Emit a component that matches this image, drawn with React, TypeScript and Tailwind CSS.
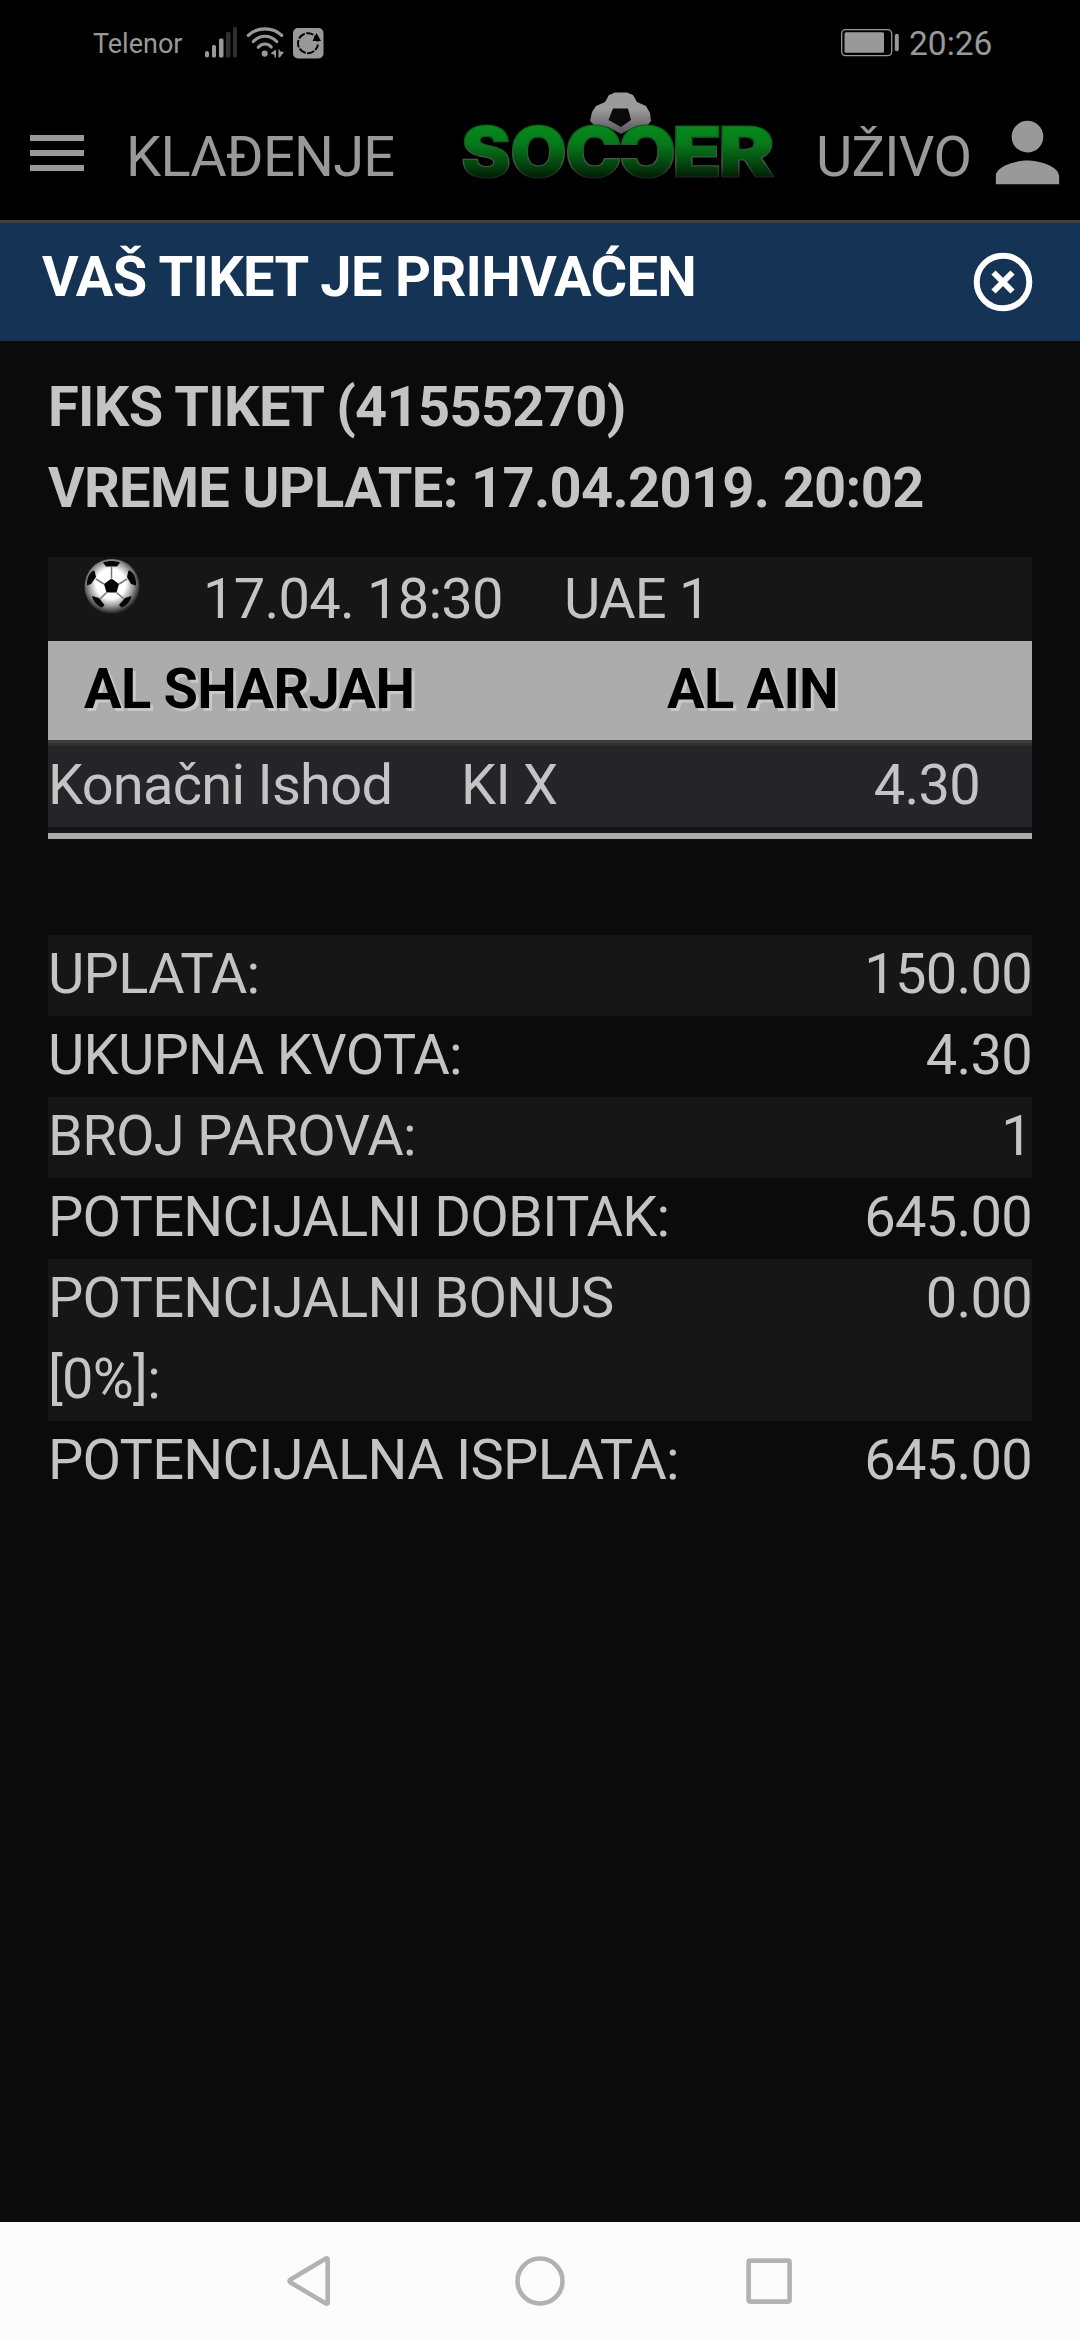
import React from 'react';

interface SummaryRow {
  label: string;
  value: string;
}

const summary: SummaryRow[] = [
  { label: 'UPLATA:', value: '150.00' },
  { label: 'UKUPNA KVOTA:', value: '4.30' },
  { label: 'BROJ PAROVA:', value: '1' },
  { label: 'POTENCIJALNI DOBITAK:', value: '645.00' },
  { label: 'POTENCIJALNI BONUS [0%]:', value: '0.00' },
  { label: 'POTENCIJALNA ISPLATA:', value: '645.00' },
];

const StatusBar: React.FC = () => (
  <div className="flex h-[86px] items-center pl-[93px] pr-[87px] tracking-normal text-[#999]">
    <span className="w-[111px] pt-px text-[27px] leading-[86px]">Telenor</span>
    <svg width="120" height="86" viewBox="204 0 120 86" fill="#999">
      <rect x="205" y="51" width="4" height="6.500" rx="2" />
      <rect x="212" y="45" width="4" height="12.500" rx="1.500" />
      <rect x="219" y="38.500" width="4.500" height="19" rx="1.500" />
      <rect x="226" y="32" width="4.500" height="25.500" rx="1.500" fill="#2f2f2f" />
      <rect x="233" y="27" width="4" height="30.500" rx="1.500" fill="#2f2f2f" />
      {/* wifi */}
      <g fill="none" stroke="#999" strokeWidth="3.200" strokeLinecap="round">
        <path d="M248.300 35.400C257 26.600 273 26.600 281.700 35.400" />
        <path d="M253.300 41.500C260 34.500 270 34.500 276.700 41.500" />
        <path d="M258.300 47.200C262 43 268 43 271.200 47" />
      </g>
      <circle cx="264.700" cy="53.600" r="3.100" />
      <path d="M276 49.500V57.500H274.500V55L270.500 53.200ZM278.500 49.500L279.800 49.500V51.300L284 52L279.800 57.500H278.500Z" />
      <rect x="293" y="28" width="30.500" height="30.500" rx="5" />
      <circle cx="308" cy="43.200" r="10" fill="none" stroke="#000" strokeWidth="2" strokeDasharray="7.500 1.500" />
      <path d="M312 41.500H321.500V44.500H312Z" fill="#999" />
      <path d="M316.500 33L321 41H312.500Z" fill="#000" />
    </svg>
    <div className="ml-auto flex items-center">
      <svg width="60" height="86" viewBox="840 0 60 86" fill="#999">
        <rect x="841.700" y="29.600" width="50" height="26" rx="4" fill="none" stroke="#999" strokeWidth="1.300" />
        <rect x="844.500" y="32.300" width="39.500" height="20.500" rx="1.500" />
        <rect x="894.800" y="33.800" width="4" height="17.500" rx="2" />
      </svg>
      <span className="ml-[9px] w-[84px] pt-px text-[33.5px] leading-[87px]">20:26</span>
    </div>
  </div>
);

const Logo: React.FC = () => (
  <svg className="shrink-0" width="320" height="114" viewBox="458 86 320 114">
    <defs>
      <linearGradient id="grass" gradientUnits="userSpaceOnUse" x1="0" y1="125" x2="0" y2="179">
        <stop offset="0" stopColor="#068a1c" />
        <stop offset="0.350" stopColor="#067a1b" />
        <stop offset="0.800" stopColor="#033a0c" />
        <stop offset="1" stopColor="#011803" />
      </linearGradient>
      <linearGradient id="edge" gradientUnits="userSpaceOnUse" x1="0" y1="125" x2="0" y2="179">
        <stop offset="0.200" stopColor="#0a5a18" />
        <stop offset="0.700" stopColor="#4c5a4c" />
        <stop offset="0.950" stopColor="#1c241c" />
      </linearGradient>
      <linearGradient id="leather" x1="0" y1="0" x2="0" y2="1">
        <stop offset="0.400" stopColor="#9b9b9b" />
        <stop offset="1" stopColor="#5a525a" />
      </linearGradient>
    </defs>
    <path
      d="M609 95L615 92.500H627L633 95L637 102L646 106L650 113L651 121L647 126L634 127L621 134L608 127L595 126L590 121L592 112L596 106L605 102Z"
      fill="url(#leather)"
    />
    <path d="M613 108.500H628L631 120L621 127L608.500 120Z" fill="#0a0a0a" />
    <g
      fontFamily="Inter, 'Liberation Sans', sans-serif"
      fontWeight="900"
      fontSize="70"
      letterSpacing="0"
      fill="url(#grass)"
      stroke="url(#edge)"
      strokeWidth="1.200"
    >
      <text x="461" y="177" textLength="50" lengthAdjust="spacingAndGlyphs">S</text>
      <text x="510" y="177" textLength="57" lengthAdjust="spacingAndGlyphs">O</text>
      <text x="565" y="177" textLength="57" lengthAdjust="spacingAndGlyphs">C</text>
      <text x="-676" y="177" textLength="57" lengthAdjust="spacingAndGlyphs" transform="scale(-1 1)">C</text>
      <text x="672" y="177" textLength="50" lengthAdjust="spacingAndGlyphs">E</text>
      <text x="718" y="177" textLength="57" lengthAdjust="spacingAndGlyphs">R</text>
    </g>
  </svg>
);

const Header: React.FC = () => (
  <header className="flex h-[137px] items-start border-b-3 border-[#414141] pl-[30px] pr-[5px] text-[#999]">
    <div className="mt-[49px] flex w-[54px] flex-col gap-[9px]">
      <div className="h-[6px] bg-[#999]" />
      <div className="h-[6px] bg-[#999]" />
      <div className="h-[6px] bg-[#999]" />
    </div>
    <span className="ml-[42px] mt-[31px] w-[332px] leading-[80px]">KLAĐENJE</span>
    <Logo />
    <span className="ml-[38px] mt-[31px] leading-[80px]">UŽIVO</span>
    <svg className="ml-auto mt-[19px] shrink-0" width="95" height="95" viewBox="0 0 24 24" fill="#999">
      <path d="M12 12c2.210 0 4-1.790 4-4s-1.790-4-4-4-4 1.790-4 4 1.790 4 4 4zm0 2c-2.670 0-8 1.340-8 4v2h16v-2c0-2.660-5.330-4-8-4z" />
    </svg>
  </header>
);

const SoccerBall: React.FC = () => (
  <svg className="ml-[35px] mt-[2px] shrink-0" width="58" height="58" viewBox="83 559 58 58">
    <defs>
      <radialGradient id="ball" cx="0.480" cy="0.450" r="0.540">
        <stop offset="0.500" stopColor="#fff" />
        <stop offset="0.750" stopColor="#999" />
        <stop offset="1" stopColor="#222" />
      </radialGradient>
    </defs>
    <circle cx="112" cy="586.500" r="27.500" fill="url(#ball)" />
    <g fill="#050505">
      <path d="M111.500 578.500L119 584L116.500 592.500H106.500L104 584Z" />
      <path d="M103 562.500C108 560.500 115 560.500 120 562.500L117 566.500H106Z" />
      <path d="M87 582C88 575 91 571 94.500 570.500L96 577L91 584L87 585.500Z" />
      <path d="M136 582C135 575 132 571 128.500 570.500L127 577L131 584L136 585.500Z" />
      <path d="M92 596L99 598L104.500 605L102 607.500C97 605.500 93 601.500 92 596Z" />
      <path d="M131.500 596L125 598L119 605L121.500 607.500C126.500 605.500 130.500 601.500 131.500 596Z" />
    </g>
    <g stroke="#777" strokeWidth="1.500">
      <path d="M111.500 566.500V578M119 584L127 579M104 584L96 579M106.500 592.500L100 599M116.500 592.500L124 599" />
    </g>
  </svg>
);

const Ticket: React.FC = () => (
  <div className="mx-[48px]">
    <div className="mt-[26px] font-bold leading-[81px] tracking-[-0.67px]">
      <div>FIKS TIKET (41555270)</div>
      <div>VREME UPLATE: 17.04.2019. 20:02</div>
    </div>

    <div className="mt-[28px] border-b-6 border-[#acacac] bg-[#161616]">
      <div className="flex h-[84px] items-start">
        <SoccerBall />
        <span className="ml-[62px] w-[361px] leading-[84px]">17.04. 18:30</span>
        <span className="leading-[84px]">UAE 1</span>
      </div>
      <div className="flex h-[99px] bg-[#acacac] pl-[36px] font-bold leading-[96px] text-black [text-shadow:3px_3px_0_#c8c8c8]">
        <span className="w-[583px]">AL SHARJAH</span>
        <span>AL AIN</span>
      </div>
      <div className="h-[3px] bg-[#3c3c3a]" />
      <div className="h-[3px] bg-[#30302f]" />
      <div className="mb-[6px] flex h-[81px] bg-[#252429] pr-[52px] leading-[78px]">
        <span className="w-[413px]">Konačni Ishod</span>
        <span>KI X</span>
        <span className="ml-auto">4.30</span>
      </div>
    </div>

    <div className="mt-[96px]">
      {summary.map((row) => (
        <div key={row.label} className="flex justify-between leading-[81px] odd:bg-[#161616]">
          <span className="-mt-px mb-px w-[660px]">{row.label}</span>
          <span className="-mt-px mb-px">{row.value}</span>
        </div>
      ))}
    </div>
  </div>
);

export default function App() {
  return (
    <div className="flex h-[2340px] w-[1080px] flex-col overflow-hidden bg-[#0b0b0b] font-[Roboto,'Liberation_Sans',sans-serif] text-[56px] tracking-[-0.75px] text-[#c4c4c4]">
      <div className="bg-black">
        <StatusBar />
        <Header />
      </div>

      <div className="flex h-[118px] items-start justify-between bg-[#143355] pl-[42px] pr-[47px] font-bold text-white">
        <span className="leading-[108px] tracking-[-0.67px]">VAŠ TIKET JE PRIHVAĆEN</span>
        <svg className="mt-[29px]" width="60" height="60" viewBox="0 0 60 60" fill="none" stroke="#fff">
          <circle cx="30" cy="30" r="26.300" strokeWidth="6" />
          <path d="M20.500 20.500L39.500 39.500M39.500 20.500L20.500 39.500" strokeWidth="6" />
        </svg>
      </div>

      <Ticket />

      <nav className="mt-auto flex h-[118px] shrink-0 items-center justify-center bg-[#fcfcfc]">
        <svg width="520" height="118" viewBox="280 2222 520 118" fill="none" stroke="#b2b2b2" strokeWidth="4.600" strokeLinejoin="round">
          <path d="M327.700 2259.500Q327.700 2257.500 325.500 2258.800L290.500 2279.500Q288.500 2281 290.500 2282.500L325.500 2303.200Q327.700 2304.500 327.700 2302.500Z" />
          <circle cx="540" cy="2281" r="22.500" />
          <rect x="748.600" y="2260.600" width="41" height="41" rx="1.500" />
        </svg>
      </nav>
    </div>
  );
}
